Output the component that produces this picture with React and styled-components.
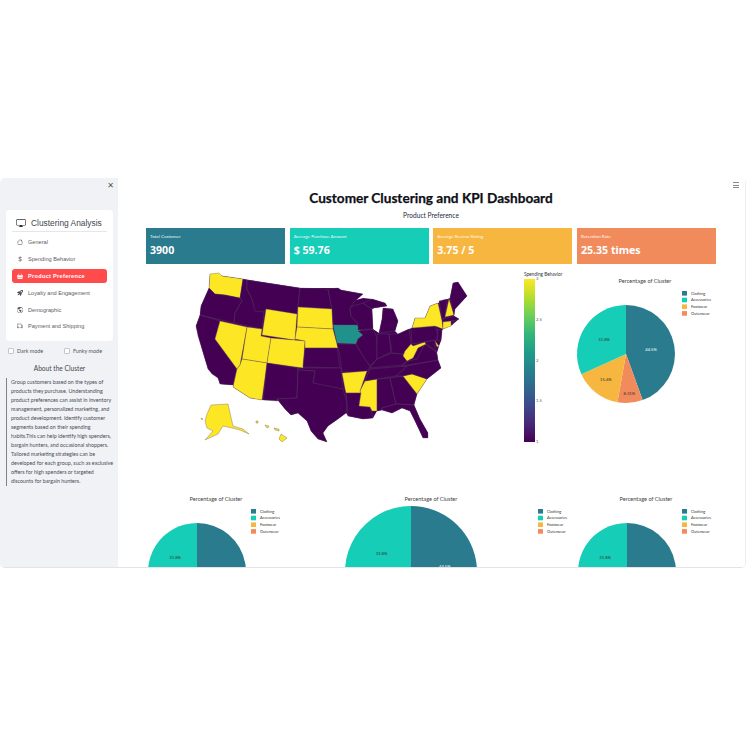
import React from "react";
import styled, { createGlobalStyle } from "styled-components";
import {
  BsBasketFill,
  BsCurrencyDollar,
  BsDisplay,
  BsGlobeAmericas,
  BsHouse,
  BsRocketTakeoffFill,
  BsTruck,
} from "react-icons/bs";

const COLORS = ["#2a7b8e", "#16cdb7", "#f7b63f", "#f28b5c"];
const LEGEND = ["Clothing", "Accessories", "Footwear", "Outerwear"];
const PURPLE = "#440154";
const YELLOW = "#fde725";
const TEAL = "#21918c";

// lower 48 silhouette, sits under the states so no gaps show between them
const LAND =
  "210,273 243,278 300,287 338,287 341,289 363,293 356,299 363,297 372,298 385,302 387,305 374,307 372,308 373,328 379,332 382,318 383,307 393,308 398,320 395,330 398,333 409,328 412,327 415,317 425,317 430,305 438,302 450,297 453,282 458,281 467,295 455,308 454,315 459,318 452,324 443,328 442,330 441,340 439,345 437,352 438,359 441,367 427,378 417,393 414,404 420,418 428,432 428,437 423,437 415,420 410,410 402,407 392,412 382,409 377,410 373,417 363,418 348,415 346,412 338,418 328,425 323,432 327,441 318,438 311,430 307,420 298,412 291,414 285,408 277,398 263,399 250,397 233,386 233,384 220,383 218,377 208,368 202,348 196,325 200,314 201,305 209,287";

// state outlines, in page pixels of the map area
const STATES = [
  [YELLOW, "210,273 219,272 222,275 243,278 240,297 225,294 215,293 209,287"],
  [PURPLE, "209,287 215,293 225,294 240,297 242,300 235,312 234,322 200,314 201,305"],
  [PURPLE, "200,314 220,320 215,338 237,368 233,384 220,383 218,377 212,373 208,368 205,358 202,348 198,335 196,325"],
  [YELLOW, "220,320 247,326 240,364 237,368 215,338"],
  [PURPLE, "243,278 247,279 247,288 252,298 255,308 264,311 262,328 234,322 235,312 242,300 240,297"],
  [PURPLE, "247,279 300,287 297,315 266,308 264,311 255,310 252,298 247,288"],
  [YELLOW, "266,308 297,313 295,339 262,334"],
  [YELLOW, "247,326 262,328 261,335 271,337 267,362 242,358"],
  [YELLOW, "271,337 305,340 303,367 267,362"],
  [YELLOW, "242,358 267,362 262,399 250,397 233,386 237,368 240,364"],
  [PURPLE, "267,362 298,367 297,397 277,398 278,400 263,399"],
  [PURPLE, "300,287 328,288 332,308 298,306"],
  [YELLOW, "298,306 332,308 333,328 297,326"],
  [YELLOW, "297,326 333,328 338,347 305,347 305,340 295,338"],
  [PURPLE, "305,347 337,347 340,367 303,366"],
  [PURPLE, "298,367 341,367 343,388 325,386 313,382 315,370 298,369"],
  [PURPLE, "277,398 297,397 298,369 315,370 313,382 343,388 347,402 346,412 338,418 328,425 323,432 327,441 318,438 311,430 307,420 298,412 291,414 285,408"],
  [PURPLE, "328,288 338,287 341,289 363,293 353,302 350,309 351,315 358,323 359,325 333,324 332,308"],
  [TEAL, "333,324 357,324 363,334 358,338 356,343 337,342"],
  [PURPLE, "337,343 356,343 363,355 370,365 367,371 342,371 340,355"],
  [YELLOW, "342,372 367,370 360,390 361,392 346,392 345,388"],
  [PURPLE, "346,392 361,392 359,405 370,406 373,417 363,418 348,415 347,402"],
  [YELLOW, "365,380 377,378 377,410 372,410 370,406 359,405 361,392 360,390"],
  [PURPLE, "377,378 390,377 396,403 382,407 382,409 377,410"],
  [PURPLE, "390,377 403,375 417,393 414,404 396,403"],
  [PURPLE, "382,407 396,403 414,404 420,418 428,432 428,437 423,437 415,420 410,410 402,407 392,412 382,409"],
  [YELLOW, "403,375 412,373 427,378 417,393"],
  [PURPLE, "438,359 441,367 427,378 412,373 403,375 396,375 407,365"],
  [PURPLE, "365,380 377,378 396,375 407,365 370,368"],
  [PURPLE, "438,359 402,365 408,360 417,358 425,343 435,350 437,353"],
  [PURPLE, "370,367 402,364 408,359 403,353 392,352 377,358"],
  [PURPLE, "358,330 373,328 377,337 377,358 370,365 363,355 356,343 358,338 363,334"],
  [PURPLE, "350,306 363,302 372,308 373,328 358,329 358,323 351,315"],
  [PURPLE, "383,307 393,308 398,320 395,330 379,332 382,318"],
  [PURPLE, "363,302 372,298 385,302 387,305 374,307 372,308"],
  [PURPLE, "377,333 389,333 391,351 377,358"],
  [PURPLE, "389,333 398,333 409,328 411,343 403,353 392,352"],
  [YELLOW, "411,343 413,345 425,341 426,343 418,347 413,357 407,360 403,355 405,350"],
  [PURPLE, "411,327 435,325 438,333 437,339 412,343"],
  [YELLOW, "415,317 425,317 430,305 438,302 442,320 443,328 435,325 412,327"],
  [PURPLE, "437,328 442,330 441,340 437,339 438,333"],
  [YELLOW, "435,340 439,345 437,346"],
  [PURPLE, "425,341 435,339 435,347 437,352 432,347 426,343"],
  [PURPLE, "439,300 447,298 445,317 442,318"],
  [YELLOW, "449,298 454,314 445,316 447,307"],
  [PURPLE, "450,297 453,282 458,281 467,295 455,308 454,314"],
  [PURPLE, "443,318 454,315 459,318 453,320 443,321"],
  [YELLOW, "443,321 451,320 451,325 443,328"],
  [PURPLE, "451,320 454,320 452,324"],
  [YELLOW, "211,404 228,403 233,425 243,428 249,433 240,429 232,427 223,425 218,433 205,439 213,430 207,427 205,420 207,413"],
  [YELLOW, "201,417 203,418 202,419"],
  [YELLOW, "256,420 258,420 258,422 256,422"],
  [YELLOW, "265,424 269,425 268,427 266,426"],
  [YELLOW, "274,427 279,428 279,430 275,429"],
  [YELLOW, "281,433 287,437 282,441 279,438"],
];

const VIRIDIS =
  "linear-gradient(to top, #440154, #482878, #3e4989, #31688e, #26828e, #1f9e89, #35b779, #6ece58, #b5de2b, #fde725)";

const NAV = [
  ["General", BsHouse],
  ["Spending Behavior", BsCurrencyDollar],
  ["Product Preference", BsBasketFill],
  ["Loyalty and Engagement", BsRocketTakeoffFill],
  ["Demographic", BsGlobeAmericas],
  ["Payment and Shipping", BsTruck],
];

const KPIS = [
  ["Total Customer", "3900"],
  ["Average Purchase Amount", "$ 59.76"],
  ["Average Review Rating", "3.75 / 5"],
  ["Retention Rate", "25.35 times"],
];

const ABOUT =
  "Group customers based on the types of products they purchase. Understanding product preferences can assist in inventory management, personalized marketing, and product development. Identify customer segments based on their spending habits.This can help identify high spenders, bargain hunters, and occasional shoppers. Tailored marketing strategies can be developed for each group, such as exclusive offers for high spenders or targeted discounts for bargain hunters.";

const GlobalStyle = createGlobalStyle`
  html, body {
    margin: 0;
    background: #fff;
  }
`;

const Page = styled.div`
  padding-top: 178px;
  height: 746px;
  box-sizing: border-box;
  font-family: "Lato", "Noto Sans", sans-serif;
`;

const Frame = styled.div`
  display: flex;
  height: 390px;
  overflow: hidden;
  border-radius: 5px;
  border-bottom: 1px solid #e3e3e8;
  border-right: 1px solid #eeeef0;
  box-sizing: border-box;
`;

const Sidebar = styled.aside`
  position: relative;
  flex: 0 0 118px;
  min-width: 0;
  background: #f0f2f6;
  padding: 32px 5px 0 6px;
  box-sizing: border-box;
  color: #31333f;
`;

const Close = styled.span`
  position: absolute;
  top: 3px;
  right: 4px;
  font: 8px/9px "Liberation Sans", "DejaVu Sans", sans-serif;
  color: #555;
`;

const NavCard = styled.nav`
  display: flex;
  flex-direction: column;
  height: 131px;
  padding: 5px 6px 0;
  box-sizing: border-box;
  background: #fff;
  border-radius: 4px;
  font-family: "Liberation Sans", sans-serif;
`;

const NavTitle = styled.div`
  display: flex;
  align-items: center;
  gap: 5px;
  height: 16px;
  padding-left: 4px;
  border-bottom: 1px solid #e6e6ea;
  font-size: 8.4px;
  color: #44464f;
  white-space: nowrap;

  svg {
    flex: none;
    width: 10px;
    height: 10px;
    color: #333;
  }
`;

const NavList = styled.div`
  display: flex;
  flex-direction: column;
  gap: 2.9px;
  margin-top: 3px;
`;

const NavItem = styled.div`
  display: flex;
  align-items: center;
  gap: 5px;
  height: 14px;
  padding-left: 5px;
  border-radius: 3px;
  font-size: 5.6px;
  white-space: nowrap;
  font-weight: ${(p) => (p.$active ? 700 : 400)};
  letter-spacing: ${(p) => (p.$active ? "0.3px" : "0")};
  color: ${(p) => (p.$active ? "#fff" : "#5a5c66")};
  background: ${(p) => (p.$active ? "#ff4b4b" : "transparent")};

  svg {
    flex: none;
    width: 6px;
    height: 6px;
    color: ${(p) => (p.$active ? "#fff" : "#4b4d57")};
  }
`;

const Toggles = styled.div`
  display: grid;
  grid-template-columns: 56px auto;
  margin: 7px 0 0 1.5px;
`;

const Toggle = styled.label`
  display: flex;
  align-items: center;
  gap: 3.5px;
  font-size: 5.4px;
  color: #555;
`;

const Box = styled.span`
  width: 4px;
  height: 4px;
  background: #fff;
  border: 1px solid #c5c7ce;
  border-radius: 1px;
`;

const AboutTitle = styled.div`
  margin-top: 9px;
  text-align: center;
  font-size: 6.6px;
  line-height: 11px;
  color: #45474f;
`;

const Quote = styled.blockquote`
  margin: 4px -3px 0 0;
  padding-left: 4px;
  border-left: 1px solid #80828a;
  font-size: 5.35px;
  line-height: 9px;
  color: #4a4c56;
`;

const Main = styled.main`
  position: relative;
  flex: 1;
  min-width: 0;
  padding: 0 29px 0 28px;
  background: #fff;
  overflow: hidden;
`;

const Menu = styled.span`
  position: absolute;
  top: 4px;
  right: 6px;
  width: 6px;
  height: 4px;
  border-top: 1px solid #888;
  border-bottom: 1px solid #888;

  &::after {
    content: "";
    display: block;
    height: 1px;
    margin-top: 1.5px;
    background: #888;
  }
`;

const Title = styled.h1`
  margin: 12px 0 0;
  text-align: center;
  font-family: "Lato", "Noto Sans", sans-serif;
  font-size: 13.6px;
  line-height: 17px;
  font-weight: 700;
  color: #0d0f16;
  white-space: nowrap;
  -webkit-text-stroke: 0.25px #0d0f16;
`;

const SubTitle = styled.h2`
  margin: 3px 0 0;
  text-align: center;
  font-size: 6.6px;
  line-height: 10px;
  font-weight: 400;
  color: #1f2a44;
`;

const KpiRow = styled.section`
  display: grid;
  grid-template-columns: repeat(4, 139px);
  justify-content: space-between;
  margin-top: 8px;
`;

const Kpi = styled.div`
  height: 36px;
  padding: 5px 4px 0;
  box-sizing: border-box;
  background: ${(p) => p.$color};
  color: #fff;
`;

const KpiLabel = styled.div`
  font-size: 4.6px;
  line-height: 7px;
  opacity: 0.92;
`;

const KpiValue = styled.div`
  margin-top: 3px;
  font-family: "Noto Sans", sans-serif;
  font-size: 10.6px;
  line-height: 14px;
  font-weight: 700;
  white-space: nowrap;
`;

const ChartRow = styled.section`
  display: flex;
  margin: 2px -29px 0 -28px;
  height: 228px;
`;

const MapSvg = styled.svg`
  flex: none;
  margin-left: 72px;
`;

const ColorBar = styled.div`
  position: relative;
  flex: none;
  width: 11px;
  height: 163px;
  margin: 13px 0 0 54px;
  background: ${VIRIDIS};
`;

const BarTitle = styled.div`
  position: absolute;
  top: -8px;
  left: 0;
  font-size: 4.7px;
  line-height: 7px;
  color: #333;
  white-space: nowrap;
`;

const BarTick = styled.div`
  position: absolute;
  left: 12px;
  font-size: 4.2px;
  line-height: 6px;
  color: #555;
  transform: translateY(-50%);
  white-space: nowrap;
`;

const PieRow = styled.section`
  display: flex;
  margin: 0 -29px 0 -28px;
`;

const PieSvg = styled.svg`
  flex: none;
  font-family: "Lato", sans-serif;
`;

function slicePath(cx, cy, r, from, to) {
  const point = (t) => {
    const a = t * 2 * Math.PI;
    return `${cx + r * Math.sin(a)} ${cy - r * Math.cos(a)}`;
  };
  const large = to - from > 0.5 ? 1 : 0;
  return `M${cx} ${cy}L${point(from)}A${r} ${r} 0 ${large} 1 ${point(to)}Z`;
}

// clockwise from twelve o'clock, label distance as a share of the radius
const SLICES = [
  { share: 0.445, color: 0, label: "44.5%", at: 0.52, fill: "#fff" },
  { share: 0.0831, color: 3, label: "8.31%", at: 0.8, fill: "#333" },
  { share: 0.154, color: 2, label: "15.4%", at: 0.67, fill: "#333" },
  { share: 0.318, color: 1, label: "31.8%", at: 0.53, fill: "#333" },
];

function Pie({ width, height, cx, cy, r, titleX, titleY, legendX, legendY }) {
  let start = 0;
  return (
    <PieSvg width={width} height={height} viewBox={`0 0 ${width} ${height}`}>
      <text x={titleX} y={titleY} textAnchor="middle" fontSize="5.6" fill="#444">
        Percentage of Cluster
      </text>
      {SLICES.map((s) => {
        const from = start;
        start += s.share;
        const mid = ((from + start) / 2) * 2 * Math.PI;
        const labelY = cy - r * s.at * Math.cos(mid) + 1.5;
        return (
          <g key={s.label}>
            <path d={slicePath(cx, cy, r, from, start)} fill={COLORS[s.color]} />
            {/* labels past the fold are not drawn */}
            {labelY < height && (
              <text
                x={cx + r * s.at * Math.sin(mid)}
                y={labelY}
                textAnchor="middle"
                fontSize="4.2"
                fill={s.fill}
              >
                {s.label}
              </text>
            )}
          </g>
        );
      })}
      {LEGEND.map((name, i) => (
        <g key={name}>
          <rect x={legendX} y={legendY + i * 6.7} width="5" height="4.6" fill={COLORS[i]} />
          <text x={legendX + 9} y={legendY + i * 6.7 + 3.6} fontSize="3.9" fill="#333">
            {name}
          </text>
        </g>
      ))}
    </PieSvg>
  );
}

export default function App() {
  return (
    <Page>
      <GlobalStyle />
      <Frame>
        <Sidebar>
          <Close>✕</Close>
          <NavCard>
            <NavTitle>
              <BsDisplay />
              Clustering Analysis
            </NavTitle>
            <NavList>
              {NAV.map(([name, Icon]) => (
                <NavItem key={name} $active={name === "Product Preference"}>
                  <Icon />
                  {name}
                </NavItem>
              ))}
            </NavList>
          </NavCard>
          <Toggles>
            <Toggle>
              <Box />
              Dark mode
            </Toggle>
            <Toggle>
              <Box />
              Funky mode
            </Toggle>
          </Toggles>
          <AboutTitle>About the Cluster</AboutTitle>
          <Quote>{ABOUT}</Quote>
        </Sidebar>
        <Main>
          <Menu />
          <Title>Customer Clustering and KPI Dashboard</Title>
          <SubTitle>Product Preference</SubTitle>
          <KpiRow>
            {KPIS.map(([label, value], i) => (
              <Kpi key={label} $color={COLORS[i]}>
                <KpiLabel>{label}</KpiLabel>
                <KpiValue>{value}</KpiValue>
              </Kpi>
            ))}
          </KpiRow>
          <ChartRow>
            <MapSvg width="280" height="180" viewBox="190 265 280 180">
              <polygon points={LAND} fill={PURPLE} />
              {STATES.map(([fill, points]) => (
                <polygon
                  key={points}
                  points={points}
                  fill={fill}
                  stroke="#5c4f63"
                  strokeWidth="0.35"
                  strokeLinejoin="round"
                />
              ))}
            </MapSvg>
            <ColorBar>
              <BarTitle>Spending Behavior</BarTitle>
              {["3", "2.5", "2", "1.5", "1"].map((tick, i) => (
                <BarTick key={tick} style={{ top: `${i * 25}%` }}>
                  {tick}
                </BarTick>
              ))}
            </ColorBar>
            <Pie
              width={210}
              height={200}
              cx={91}
              cy={88}
              r={49}
              titleX={110}
              titleY={17}
              legendX={147}
              legendY={25}
            />
          </ChartRow>
          <PieRow>
            <Pie
              width={202}
              height={74}
              cx={79}
              cy={78}
              r={49}
              titleX={98}
              titleY={7}
              legendX={133}
              legendY={15}
            />
            <Pie
              width={250}
              height={74}
              cx={91}
              cy={78}
              r={66}
              titleX={111}
              titleY={7}
              legendX={218}
              legendY={15}
            />
            <Pie
              width={176}
              height={74}
              cx={57}
              cy={78}
              r={49}
              titleX={76}
              titleY={7}
              legendX={112}
              legendY={15}
            />
          </PieRow>
        </Main>
      </Frame>
    </Page>
  );
}
